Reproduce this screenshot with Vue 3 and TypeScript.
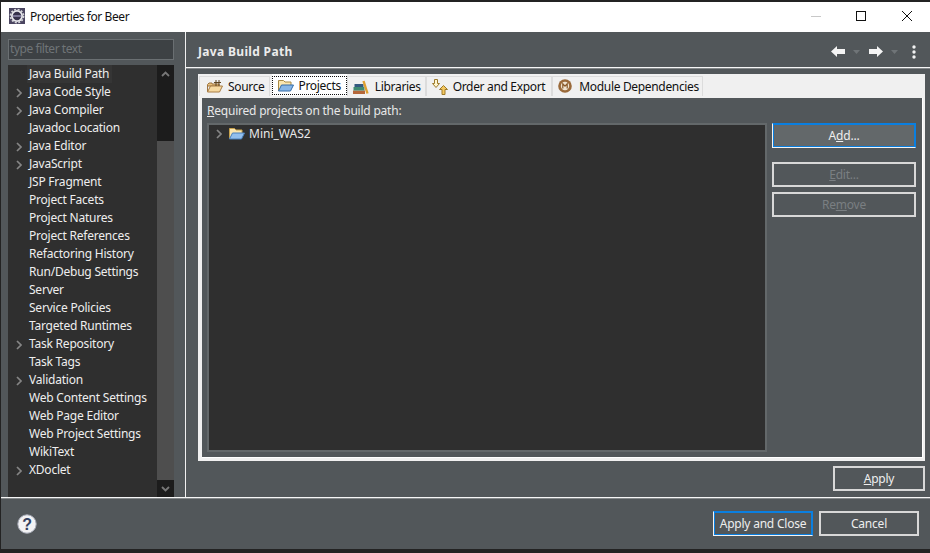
<script setup lang="ts">
interface Item { label: string; arrow: boolean; sel?: boolean }
const items: Item[] = [
  { label: 'Java Build Path', arrow: false, sel: true },
  { label: 'Java Code Style', arrow: true },
  { label: 'Java Compiler', arrow: true },
  { label: 'Javadoc Location', arrow: false },
  { label: 'Java Editor', arrow: true },
  { label: 'JavaScript', arrow: true },
  { label: 'JSP Fragment', arrow: false },
  { label: 'Project Facets', arrow: false },
  { label: 'Project Natures', arrow: false },
  { label: 'Project References', arrow: false },
  { label: 'Refactoring History', arrow: false },
  { label: 'Run/Debug Settings', arrow: false },
  { label: 'Server', arrow: false },
  { label: 'Service Policies', arrow: false },
  { label: 'Targeted Runtimes', arrow: false },
  { label: 'Task Repository', arrow: true },
  { label: 'Task Tags', arrow: false },
  { label: 'Validation', arrow: true },
  { label: 'Web Content Settings', arrow: false },
  { label: 'Web Page Editor', arrow: false },
  { label: 'Web Project Settings', arrow: false },
  { label: 'WikiText', arrow: false },
  { label: 'XDoclet', arrow: true },
]
</script>

<template>
  <div class="win">
    <div class="titlebar">
      <svg class="appicon" width="16" height="16" viewBox="0 0 16 16">
        <rect width="16" height="16" fill="#4a4560" />
        <circle cx="8" cy="8" r="6" fill="#e6e6ea" />
        <circle cx="8" cy="8" r="6.6" fill="none" stroke="#d8d8dc" stroke-width="1.6" stroke-dasharray="2 1.5" />
        <circle cx="8" cy="8" r="4.2" fill="#35304a" />
        <rect x="3.800" y="7.200" width="8.400" height="1.600" fill="#8a86a8" />
      </svg>
      <span class="title">Properties for Beer</span>
      <div class="caption">
        <svg width="10" height="10" viewBox="0 0 10 10"><path d="M0 5.500h10" stroke="#c8c8c8" /></svg>
        <svg class="cmax" width="10" height="10" viewBox="0 0 10 10"><rect x="0.500" y="0.500" width="9" height="9" fill="none" stroke="#111" /></svg>
        <svg class="cclose" width="10" height="10" viewBox="0 0 10 10"><path d="M0 0l10 10M10 0L0 10" stroke="#111" /></svg>
      </div>
    </div>

    <div class="main">
      <aside class="side">
        <div class="filter">type filter text</div>
        <div class="tree">
          <div class="rows">
            <div v-for="it in items" :key="it.label" class="row">
              <svg v-if="it.arrow" class="chev" width="6" height="10" viewBox="0 0 6 10"><path d="M1 1l4 4-4 4" fill="none" stroke="#858585" stroke-width="1.700" /></svg>
              <span class="lbl" :class="{ sel: it.sel }">{{ it.label }}</span>
            </div>
          </div>
          <div class="sbar">
            <div class="sbtn"><svg width="9" height="6" viewBox="0 0 9 6"><path d="M1 5l3.500-3.500L8 5" fill="none" stroke="#777" stroke-width="1.800" /></svg></div>
            <div class="strack"></div>
            <div class="sthumb"></div>
            <div class="sbtn"><svg width="9" height="6" viewBox="0 0 9 6"><path d="M1 1l3.500 3.500L8 1" fill="none" stroke="#777" stroke-width="1.800" /></svg></div>
          </div>
        </div>
      </aside>

      <section class="content">
        <header class="head">
          <span class="headtitle">Java Build Path</span>
          <div class="nav">
            <svg width="14" height="11" viewBox="0 0 14 11"><path d="M0 5.500L6 0V3H14V8H6V11Z" fill="#f4f4f4" /></svg>
            <svg class="tri" width="7" height="4" viewBox="0 0 7 4"><path d="M0 0h7L3.500 4z" fill="#6f7477" /></svg>
            <svg class="nr" width="14" height="11" viewBox="0 0 14 11"><path d="M14 5.500L8 0V3H0V8H8V11Z" fill="#f4f4f4" /></svg>
            <svg class="tri" width="7" height="4" viewBox="0 0 7 4"><path d="M0 0h7L3.500 4z" fill="#6f7477" /></svg>
            <svg class="dots" width="4" height="14" viewBox="0 0 4 14"><circle cx="2" cy="2" r="1.700" fill="#f2f2f2" /><circle cx="2" cy="7" r="1.700" fill="#f2f2f2" /><circle cx="2" cy="12" r="1.700" fill="#f2f2f2" /></svg>
          </div>
        </header>

        <div class="body">
          <div class="tabframe">
            <div class="tabs">
              <div class="tab first">
                <svg width="16" height="13" viewBox="0 0 16 13"><path d="M0.500 12V4.500L2 3h3v1h7v2H0.500z" fill="#e8c07c" stroke="#9d7440" /><path d="M0.500 12l3-6h12l-3 6z" fill="#f6d9a0" stroke="#a87c44" /><path d="M7 2.500h7M9 0v6M12 0v6" stroke="#5d431f" /></svg>
                <span>Source</span>
              </div>
              <div class="tab active">
                <div class="focus">
                  <svg width="16" height="13" viewBox="0 0 16 13"><path d="M0.500 12V1.500h5l1.500 1.500h6v3" fill="#fbe6b0" stroke="#a98a46" /><path d="M0.500 12l3-6h12l-3 6z" fill="#86b5e8" stroke="#366ca6" /></svg>
                  <span>Projects</span>
                </div>
              </div>
              <div class="tab">
                <svg width="16" height="14" viewBox="0 0 16 14"><rect x="0" y="10.500" width="12" height="3.500" fill="#b5673a" /><rect x="0.500" y="7" width="11" height="3.500" fill="#3f8a72" /><rect x="1.500" y="4" width="9" height="3" fill="#33597f" /><path d="M10.500 1l4 12.500" stroke="#e0a030" stroke-width="2.400" /></svg>
                <span>Libraries</span>
              </div>
              <div class="tab order">
                <svg width="16" height="16" viewBox="0 0 16 16"><path d="M2.500 0.500h3v4h2L4 8.500 0.500 4.500h2z" fill="#fff6d0" stroke="#9d7a2a" /><path d="M10 15.500v-5H7.500L11.500 6.500l4 4H13v5z" fill="#f4c860" stroke="#9d7a2a" /></svg>
                <span>Order and Export</span>
              </div>
              <div class="tab last">
                <svg width="15" height="15" viewBox="0 0 15 15"><circle cx="7" cy="7" r="6.800" fill="#9a6a3a" /><circle cx="7" cy="7" r="4.200" fill="#f0e4d0" /><path d="M4.800 9.500V4.800L7 7.200 9.200 4.800V9.500" fill="none" stroke="#8a5a2a" stroke-width="1.200" /></svg>
                <span>Module Dependencies</span>
              </div>
            </div>
            <div class="panel">
              <div class="req"><u>R</u>equired projects on the build path:</div>
              <div class="split">
                <div class="list">
                  <div class="listrow">
                    <svg width="6" height="10" viewBox="0 0 6 10"><path d="M1 1l4 4-4 4" fill="none" stroke="#858585" stroke-width="1.700" /></svg>
                    <svg class="lf" width="16" height="13" viewBox="0 0 16 13"><path d="M0.500 12V1.500h5l1.500 1.500h6v3" fill="#fbe6b0" stroke="#c8a24c" /><path d="M0.500 12l3-6h12l-3 6z" fill="#93bfee" stroke="#4a80bc" /></svg>
                    <span class="ln">Mini_WAS2</span>
                  </div>
                </div>
                <div class="btns">
                  <button class="btn def">A<u>d</u>d...</button>
                  <button class="btn dis edit"><u>E</u>dit...</button>
                  <button class="btn dis">Re<u>m</u>ove</button>
                </div>
              </div>
            </div>
          </div>
          <div class="applyrow"><button class="btn apply"><u>A</u>pply</button></div>
        </div>
      </section>
    </div>

    <footer class="foot">
      <svg width="20" height="20" viewBox="0 0 20 20">
        <circle cx="10" cy="10" r="9.200" fill="#f2f2f4" stroke="#a8acb8" />
        <text x="10" y="15.500" text-anchor="middle" class="q">?</text>
      </svg>
      <div class="footbtns">
        <button class="btn focusd close">Apply and Close</button>
        <button class="btn cancel">Cancel</button>
      </div>
    </footer>
  </div>
</template>

<style>
html, body { margin: 0; background: #1e1e1e; }
</style>

<style scoped>
.win {
  width: 930px; height: 553px; overflow: hidden; box-sizing: border-box;
  padding: 2px 0 4px 1px; background: #232323;
  display: flex; flex-direction: column;
  font: 12px "Noto Sans", "Noto Sans CJK KR", sans-serif; color: #eeeeee; letter-spacing: -0.22px;
}
svg { flex: none; display: block; }
.titlebar { height: 30px; flex: none; box-sizing: border-box; background: #fff; display: flex; align-items: center; padding: 0 0 2px 8px; color: #111; }
.title { margin-left: 5px; letter-spacing: -0.42px; }
.caption { margin-left: auto; display: flex; padding-right: 18px; }
.cmax { margin-left: 35px; }
.cclose { margin-left: 36px; }
.main { flex: none; height: 465px; display: flex; background: #52575a; }
.side { flex: none; border-right: 1px solid #f0f0f0; padding: 7px 0 0 7px; width: 177px; display: flex; flex-direction: column; }
.filter { width: 166px; height: 21px; box-sizing: border-box; border: 1px solid #6a6f72; background: #3d4144; color: #6f7477; line-height: 17px; padding-left: 1px; letter-spacing: -0.45px; }
.tree { margin-top: 5px; width: 166px; flex: 1; display: flex; background: #2f2f2f; }
.rows { flex: 1; }
.row { height: 18px; display: flex; align-items: center; padding-left: 21px; position: relative; }
.chev { position: absolute; left: 8px; top: 5px; }
.lbl { padding-right: 3px; line-height: 18px; }
.lbl.sel { background: #353535; margin-left: -2px; padding-left: 2px; }
.sbar { width: 17px; flex: none; display: flex; flex-direction: column; background: #1c1c1c; }
.sbtn { height: 17px; display: flex; align-items: center; justify-content: center; }
.strack { height: 59px; }
.sthumb { flex: 1; background: #4e4e4e; }
.content { flex: 1; display: flex; flex-direction: column; min-width: 0; }
.head { height: 35px; flex: none; box-sizing: border-box; display: flex; align-items: center; padding: 4px 14px 0 12px; }
.headtitle { font-weight: 700; color: #ececec; letter-spacing: 0.33px; }
.nav { margin-left: auto; display: flex; align-items: center; }
.tri { margin-left: 8px; }
.nr { margin-left: 9px; }
.dots { margin-left: 14px; }
.body { flex: 1; border-top: 1px solid #f6f6f6; box-shadow: inset 0 1px 0 #85898b; display: flex; flex-direction: column; padding: 6px 5px 0 12px; }
.tabframe { height: 387px; flex: none; background: #f0f0f0; display: flex; flex-direction: column; box-sizing: border-box; padding-right: 2px; }
.tabs { height: 24px; flex: none; display: flex; align-items: flex-start; padding-left: 1px; color: #111; letter-spacing: -0.33px; }
.tab { height: 19px; margin-top: 2px; display: flex; align-items: center; gap: 6px; padding: 0 4px 0 5px; border: 1px solid #dcdcdc; border-bottom: 0; box-sizing: content-box; }
.tab.first { margin-right: 2px; padding-left: 7px; gap: 5px; }
.tab.order { gap: 5px; padding-right: 6px; }
.tab.last { padding-right: 3px; }
.tab.active { height: 22px; margin-top: 0; background: #fff; padding: 0; border: 0; align-items: flex-start; }
.focus { outline: 1px dotted #111; outline-offset: -1px; height: 19px; margin-top: 2px; display: flex; align-items: center; gap: 5px; padding: 0 6px 0 6px; }
.panel { flex: 1; background: #52575a; margin: 0 0 3px 4px; border: 1px solid #fff; border-top: 0; border-left: 0; padding: 3px 5px 5px 5px; display: flex; flex-direction: column; min-height: 0; }
.req { line-height: 20px; height: 22px; color: #e8e8e8; flex: none; }
.split { flex: 1; display: flex; min-height: 0; }
.list { width: 560px; flex: none; box-sizing: border-box; background: #2f2f2f; border: 2px solid #63686a; }
.listrow { height: 17px; display: flex; align-items: center; padding-left: 7px; color: #e8e8e8; }
.lf { margin-left: 7px; }
.ln { margin-left: 4px; letter-spacing: 0; }
.btns { margin-left: 5px; flex: 1; display: flex; flex-direction: column; }
.btn { box-sizing: border-box; width: 144px; height: 25px; padding: 0; font: inherit; letter-spacing: inherit; background: #52575a; color: #eeeeee; border: 2px solid #d8d8d8; display: block; text-align: center; line-height: 20px; }
.btn.def, .btn.focusd { border: 1px solid #0a7fe0; border-left-color: #f4f4f4; border-bottom-color: #f4f4f4; box-shadow: inset 0 0 0 1px #0a7fe0; }
.btn.def { background: #63686a; }
.btn.dis { color: #7a7f82; margin-top: 5px; }
.btn.edit { margin-top: 14px; }
.applyrow { display: flex; justify-content: flex-end; margin-top: 5px; }
.btn.apply { width: 92px; }
.foot { flex: 1; background: #52575a; border-top: 1px solid #f6f6f6; box-shadow: inset 0 1px 0 #85898b; display: flex; align-items: center; padding: 0 11px 0 16px; }
.footbtns { margin-left: auto; display: flex; gap: 6px; }
.btn.close, .btn.cancel { width: 100px; }
.q { font: 700 16px "Liberation Sans", sans-serif; fill: #33415f; }
</style>
